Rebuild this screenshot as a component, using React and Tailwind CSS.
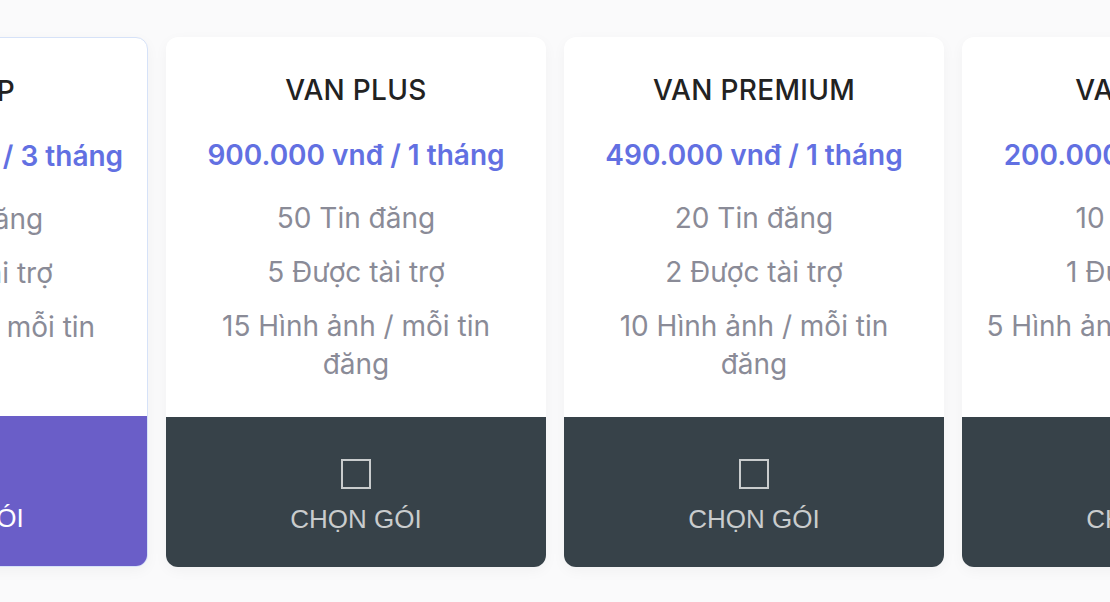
import React from "react";

const plans = [
  {
    name: "VAN VIP",
    price: "2.400.000 vnđ / 3 tháng",
    features: ["100 Tin đăng", "10 Được tài trợ", "20 Hình ảnh / mỗi tin đăng"],
    selected: true,
  },
  {
    name: "VAN PLUS",
    price: "900.000 vnđ / 1 tháng",
    features: ["50 Tin đăng", "5 Được tài trợ", "15 Hình ảnh / mỗi tin đăng"],
  },
  {
    name: "VAN PREMIUM",
    price: "490.000 vnđ / 1 tháng",
    features: ["20 Tin đăng", "2 Được tài trợ", "10 Hình ảnh / mỗi tin đăng"],
  },
  {
    name: "VAN BASIC",
    price: "200.000 vnđ / 1 tháng",
    features: ["10 Tin đăng", "1 Được tài trợ", "5 Hình ảnh / mỗi tin đăng"],
  },
];

const PlanCard = ({ plan }) => {
  return (
    <div
      className={
        plan.selected
          ? "w-[380px] h-[530px] shrink-0 flex flex-col rounded-xl overflow-hidden bg-white border border-[#d6e2f8] shadow-[0_4px_14px_rgba(0,0,0,0.04)]"
          : "w-[380px] h-[530px] shrink-0 flex flex-col rounded-xl overflow-hidden bg-white shadow-[0_4px_14px_rgba(0,0,0,0.04)]"
      }
    >
      {/* info */}
      <div className="flex-1 flex flex-col items-center text-center pt-[35px] px-[24px]">
        <h2 className="font-['Inter',sans-serif] font-medium text-[28px] leading-[36px] text-[#222] tracking-[0.3px]">
          {plan.name}
        </h2>
        <div className="mt-[29px] font-['Inter',sans-serif] font-semibold text-[28px] leading-[36px] text-[#6270e2] whitespace-nowrap">
          {plan.price}
        </div>
        <ul className="mt-[26px] flex flex-col gap-4 font-['Inter',sans-serif] text-[28px] leading-[38px] text-[#8a8b97] max-w-[332px]">
          {plan.features.map((f, i) => (
            <li key={i}>{f}</li>
          ))}
        </ul>
      </div>
      {/* button */}
      <button
        className={
          plan.selected
            ? "h-[150px] w-full flex flex-col items-center pt-[42px] bg-[#6a5ec8] text-white"
            : "h-[150px] w-full flex flex-col items-center pt-[42px] bg-[#374249] text-[#c9cccd]"
        }
      >
        <span
          className={
            plan.selected
              ? "w-[30px] h-[30px] border-2 border-white"
              : "w-[30px] h-[30px] border-2 border-[#c9cccd]"
          }
        ></span>
        <span className="mt-[14px] font-['Liberation_Sans',Arial,sans-serif] text-[26px] leading-[32px]">
          CHỌN GÓI
        </span>
      </button>
    </div>
  );
};

const App = () => {
  return (
    <div className="w-[1110px] h-[602px] bg-[#fafafb] overflow-hidden">
      <div className="flex gap-[18px] pt-[37px] -ml-[232px]">
        {plans.map((plan, i) => (
          <PlanCard key={i} plan={plan} />
        ))}
      </div>
    </div>
  );
};

export default App;
